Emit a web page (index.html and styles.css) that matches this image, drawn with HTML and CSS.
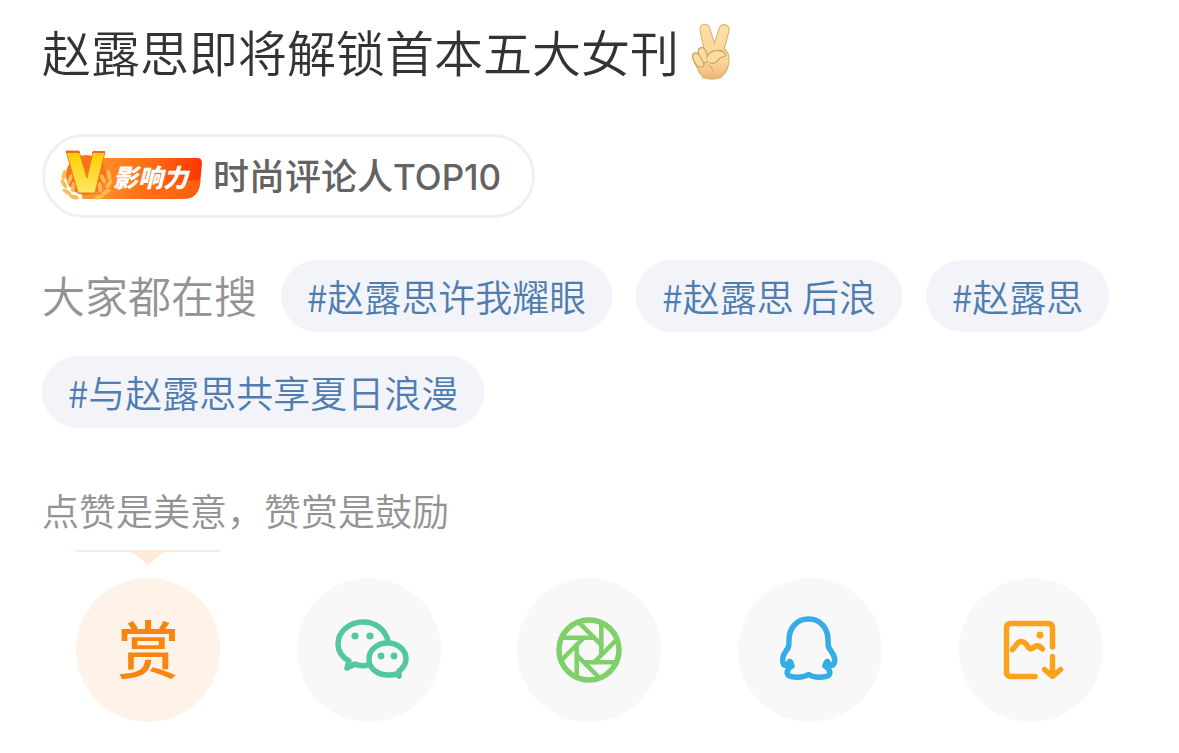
FILE: index.html
```html
<!DOCTYPE html>
<html lang="zh-CN">
<head>
    <meta charset="UTF-8">
    <meta name="viewport" content="width=device-width, initial-scale=1.0">
    <title>赵露思即将解锁首本五大女刊</title>
    <link rel="stylesheet" href="styles.css">
</head>
<body>
    <main class="post">
        <h1 class="post-title">
            赵露思即将解锁首本五大女刊
            <svg class="emoji" viewBox="32 22 118 168" role="img" aria-label="耶">
                <defs>
                    <linearGradient id="skin" x1="0" y1="0" x2="0" y2="1">
                        <stop offset="0" stop-color="#fbe0a8"/>
                        <stop offset="0.7" stop-color="#f9d598"/>
                        <stop offset="1" stop-color="#eeb672"/>
                    </linearGradient>
                </defs>
                <ellipse cx="94" cy="184" rx="34" ry="5" fill="#eadfce"/>
                <path d="M72 108 L59 45 Q56 28 71 26 Q84 25 88 39 L101 82 L115 38 Q120 25 134 27 Q147 31 144 46 L130 98 Q144 108 144 130 Q142 184 94 187 Q58 186 51 156 L40 134 Q34 120 39 113 Q46 106 55 114 Q51 98 61 95 Q68 92 72 100 Z" fill="url(#skin)" stroke="#dfae68" stroke-width="3"/>
                <g fill="#fbdda2" stroke="#cf9a58" stroke-width="3" stroke-linecap="round" stroke-linejoin="round">
                    <path d="M54 113 Q50 98 61 95 Q70 92 76 106 L83 125 Q85 136 76 139 Q67 141 63 131 Z"/>
                    <path d="M39 114 Q46 106 55 115 L68 137 Q74 147 66 151 Q57 155 50 148 L40 133 Q35 121 39 114 Z"/>
                    <path d="M78 124 Q87 103 108 103 Q124 101 132 111 Q138 119 125 122 Q116 123 111 133 Q101 145 88 139"/>
                </g>
                <path d="M80 146 Q93 147 96 163" fill="none" stroke="#d9a465" stroke-width="3" stroke-linecap="round"/>
            </svg>
        </h1>

        <a class="badge" href="#">
            <svg class="badge-logo" viewBox="0 0 142 54" role="img" aria-label="影响力">
                <defs>
                    <linearGradient id="banner" x1="0" y1="0" x2="1" y2="0">
                        <stop offset="0" stop-color="#ff9a31"/>
                        <stop offset="0.6" stop-color="#ff6a12"/>
                        <stop offset="1" stop-color="#fb3503"/>
                    </linearGradient>
                    <linearGradient id="gold" x1="0" y1="0" x2="0" y2="1">
                        <stop offset="0" stop-color="#ffcc00"/>
                        <stop offset="1" stop-color="#ffe763"/>
                    </linearGradient>
                    <g id="leaves" fill="#fdbb52">
                        <ellipse cx="4" cy="26" rx="2" ry="5" transform="rotate(12 4 26)"/>
                        <ellipse cx="4" cy="35" rx="2" ry="5" transform="rotate(-32 4 35)"/>
                        <ellipse cx="10" cy="30" rx="2" ry="5" transform="rotate(22 10 30)"/>
                        <ellipse cx="7" cy="43" rx="2" ry="5" transform="rotate(-58 7 43)"/>
                        <ellipse cx="13" cy="38" rx="2" ry="5" transform="rotate(5 13 38)"/>
                        <ellipse cx="14" cy="48" rx="2" ry="5" transform="rotate(-75 14 48)"/>
                    </g>
                </defs>
                <path d="M24 9 H137 Q142 9 142 14 L140 35 Q138 50 123 50 H22 Z" fill="url(#banner)"/>
                <path d="M90 50 Q112 31 141 31 L140 35 Q138 50 123 50 Z" fill="#ff7616" opacity="0.6"/>
                <circle cx="26" cy="26" r="20" fill="#f97318"/>
                <use href="#leaves"/>
                <use href="#leaves" transform="translate(53 0) scale(-1 1)"/>
                <path d="M6 2 H19 L27 29 L33 3 H45 L35 44 H18 Z" fill="url(#gold)" stroke="#f0801b" stroke-width="1"/>
                <path d="M6 2 H19 L20 4 H7 Z M33 2 H45 L44 4 H32 Z" fill="#ed6a1b"/>
                <text class="badge-logo-text" x="53" y="38">影响力</text>
            </svg>
            <span class="badge-text">时尚评论人<span class="badge-rank">TOP10</span></span>
        </a>

        <nav class="searches" aria-label="大家都在搜">
            <span class="searches-label">大家都在搜</span>
            <a class="tag" href="#">#赵露思许我耀眼</a>
            <a class="tag" href="#">#赵露思 后浪</a>
            <a class="tag" href="#">#赵露思</a>
            <a class="tag" href="#">#与赵露思共享夏日浪漫</a>
        </nav>

        <p class="reward-hint">点赞是美意，赞赏是鼓励</p>
    </main>

    <div class="actions">
        <div class="action">
            <svg class="pointer" viewBox="0 0 144 16" aria-hidden="true">
                <path d="M0 0 H144 V2 H91 Q87 2 84 5 L72 15 L60 5 Q57 2 53 2 H0 Z"/>
            </svg>
            <button class="circle reward" type="button">赏</button>
        </div>
        <div class="action">
            <button class="circle wechat" type="button" aria-label="微信">
                <svg viewBox="0 0 144 144">
                    <path d="M91 63 C88 51 78 44 66 44 C52 44 41 54 41 66 C41 74 45 79 52 83 L50 90 L58 86 C62 88 67 88 71 87"/>
                    <path d="M90.500 65 C80 65 72 72 72 81 C72 91 81 97 91 97 C94 97 97 97 99 96 L102 98 L102 93 C106 90 109 86 109 81 C109 72 101 65 90.500 65 Z"/>
                    <g class="solid">
                        <circle cx="58" cy="58" r="3.600"/>
                        <circle cx="73" cy="58" r="3.600"/>
                        <circle cx="84" cy="78" r="3.400"/>
                        <circle cx="97" cy="78" r="3.400"/>
                    </g>
                </svg>
            </button>
        </div>
        <div class="action">
            <button class="circle moments" type="button" aria-label="朋友圈">
                <svg viewBox="0 0 144 144">
                    <defs>
                        <path id="blade" d="M-27 -12.300 H5"/>
                    </defs>
                    <circle cx="72" cy="72" r="30"/>
                    <g transform="translate(72 72)" stroke-width="4.500">
                        <use href="#blade"/>
                        <use href="#blade" transform="rotate(45)"/>
                        <use href="#blade" transform="rotate(90)"/>
                        <use href="#blade" transform="rotate(135)"/>
                        <use href="#blade" transform="rotate(180)"/>
                        <use href="#blade" transform="rotate(225)"/>
                        <use href="#blade" transform="rotate(270)"/>
                        <use href="#blade" transform="rotate(315)"/>
                    </g>
                </svg>
            </button>
        </div>
        <div class="action">
            <button class="circle qq" type="button" aria-label="QQ">
                <svg viewBox="0 0 144 144">
                    <path d="M70.500 41 C58 41 51 51 51 62 C51 68 51 69 48 73 C44 78 44 84 46 87 C48 88 50 86 52 84 L54 88 C50 90 48 94 50 97 C54 100 65 100 70.500 96.500 C76 100 87 100 91 97 C93 94 91 90 87 88 L89 84 C91 86 93 88 95 87 C98 84 97 78 93 73 C90 69 90 68 90 62 C90 51 83 41 70.500 41 Z"/>
                    <g class="solid">
                        <path d="M46 87 L50 81 Q54 80 56 85 Q57 89 53 91 Z"/>
                        <path d="M95 87 L91 81 Q87 80 85 85 Q84 89 88 91 Z"/>
                    </g>
                </svg>
            </button>
        </div>
        <div class="action">
            <button class="circle save" type="button" aria-label="保存图片">
                <svg viewBox="1 0 144 144">
                    <path d="M94.500 69 V50 Q94.500 45.500 90 45.500 H53 Q48.500 45.500 48.500 50 V94 Q48.500 98.500 53 98.500 H77"/>
                    <path d="M54.500 71.500 L59 66 Q63 61 68 66 L71 70 Q73 72 76 69 Q80 66 84.500 71"/>
                    <path d="M94.500 78.500 V98 M86.500 91.500 L94.500 98.500 L102.500 91.500"/>
                    <circle class="solid" cx="82" cy="57" r="3.500"/>
                </svg>
            </button>
        </div>
    </div>
</body>
</html>
```
FILE: styles.css
```css
* {
    box-sizing: border-box;
}
body {
    margin: 0;
    background-color: #fff;
    font-family: "Noto Sans CJK SC", sans-serif;
    font-weight: 350;
}
a {
    text-decoration: none;
}
.post {
    padding: 21px 42px 15px;
}
.post-title {
    display: flex;
    align-items: center;
    gap: 12px;
    margin: 0 0 53px;
    font-size: 49px;
    line-height: 60px;
    font-weight: 350;
    color: #333;
}
.emoji {
    width: 40px;
    height: 57px;
}

/* influence badge */
.badge {
    display: inline-flex;
    align-items: center;
    gap: 11px;
    height: 84px;
    padding: 0 31px 0 15px;
    border: 3px solid #f0f0f0;
    border-radius: 42px;
    font-size: 36px;
    font-weight: 500;
    color: #636363;
}
.badge-logo {
    width: 142px;
    height: 54px;
}
.badge-logo-text {
    font-size: 25px;
    font-weight: 900;
    font-style: italic;
    fill: #fff;
}
.badge-text {
    padding-bottom: 4px;
}
.badge-rank {
    font-family: Inter, sans-serif;
    font-size: 35px;
}

/* related searches */
.searches {
    display: flex;
    flex-wrap: wrap;
    gap: 24px;
    margin-top: 42px;
}
.searches-label {
    font-size: 43px;
    line-height: 68px;
    color: #939393;
}
.tag {
    padding: 0 26px;
    border-radius: 36px;
    background-color: #f2f4f9;
    font-size: 37px;
    line-height: 72px;
    color: #507daf;
}
.reward-hint {
    margin: 57px 0 0;
    font-size: 37px;
    line-height: 50px;
    color: #939393;
}

/* reward and share buttons */
.actions {
    display: flex;
    align-items: flex-end;
    padding: 0 38px 31px;
}
.action {
    display: flex;
    flex: 1;
    flex-direction: column;
    align-items: center;
    gap: 12px;
}
.pointer {
    width: 144px;
    height: 16px;
    fill: #ffe9d8;
}
.circle {
    width: 144px;
    height: 144px;
    padding: 0;
    border: none;
    border-radius: 50%;
    background-color: #f8f8f8;
    cursor: pointer;
}
.circle svg {
    display: block;
    fill: none;
    stroke: currentColor;
    stroke-width: 5.5;
    stroke-linecap: round;
    stroke-linejoin: round;
}
.circle .solid {
    fill: currentColor;
    stroke: none;
}
.reward {
    padding-bottom: 5px;
    background-color: #fff3e9;
    font-family: inherit;
    font-size: 62px;
    font-weight: 500;
    line-height: 139px;
    color: #f98412;
}
.wechat {
    color: #53c89c;
}
.moments {
    color: #7fd068;
}
.qq {
    color: #34ade6;
}
.save {
    color: #f9a21c;
}
```
